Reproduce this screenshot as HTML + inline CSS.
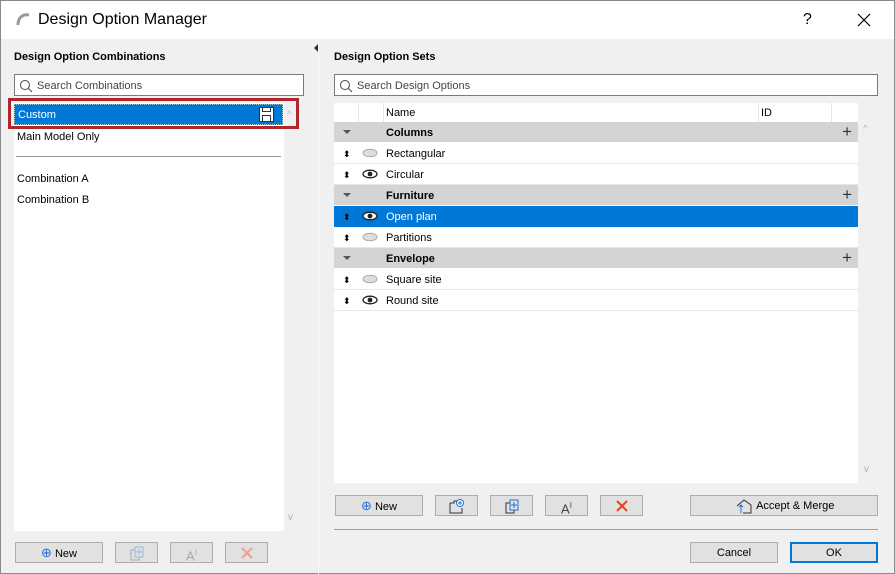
<!DOCTYPE html><html><head><style>
*{box-sizing:border-box;margin:0;padding:0}
body{width:895px;height:574px;overflow:hidden;font-family:"Liberation Sans",sans-serif;font-size:11px;color:#000;background:#f0f0f0;position:relative}
.a{position:absolute}
.win{left:0;top:0;width:895px;height:574px;border:1px solid #8a8a8a}
.title{left:1px;top:1px;width:893px;height:38px;background:#fff}
.hd{font-weight:bold;font-size:11px}
.search{background:#fff;border:1px solid #7a7a7a;height:22px;color:#444;padding-left:22px;line-height:22px}
.btn{background:#e1e1e1;border:1px solid #adadad;height:21px;text-align:center;line-height:20px}
.btn svg{vertical-align:middle}
.row{left:334px;width:524px;height:21px;border-bottom:1px solid #e6e6e6;background:#fff;line-height:22px}
.grp{background:#d4d4d4;font-weight:bold;border-bottom:1px solid #fff}
.sel{background:#0078d7;color:#fff}
.nm{position:absolute;left:52px}
.arr{position:absolute;left:9px;top:0;font-size:9px}
.tri{position:absolute;left:9px;top:8px;width:0;height:0;border-left:4px solid transparent;border-right:4px solid transparent;border-top:4px solid #555}
.plus{position:absolute;right:6px;top:-1px;font-size:17px;font-weight:normal;color:#333}
.eye{position:absolute;left:28px;top:5px}
</style></head><body>
<div class="a win"></div>
<div class="a title"></div>
<svg class="a" style="left:16px;top:12px" width="16" height="14"><path d="M2 13 C2 5 7 2 13 3" stroke="#999" stroke-width="3" fill="none"/></svg>
<div class="a" style="left:38px;top:11px;font-size:16px">Design Option Manager</div>
<div class="a" style="left:803px;top:11px;font-size:16px">?</div>
<svg class="a" style="left:857px;top:13px" width="14" height="14"><path d="M1 1L13 13M13 1L1 13" stroke="#000" stroke-width="1.2"/></svg>
<div class="a" style="left:318px;top:39px;width:1px;height:535px;background:#fafafa"></div>
<div class="a" style="left:314px;top:44px;width:0;height:0;border-top:4px solid transparent;border-bottom:4px solid transparent;border-right:4px solid #333"></div>

<div class="a hd" style="left:14px;top:51px">Design Option Combinations</div>
<div class="a search" style="left:14px;top:74px;width:290px">Search Combinations</div>
<svg class="a" style="left:19px;top:79px" width="14" height="14"><circle cx="6" cy="6" r="4.5" stroke="#444" fill="none"/><path d="M9.5 9.5L13 13" stroke="#444"/></svg>
<div class="a" style="left:14px;top:103px;width:270px;height:428px;background:#fff"></div>
<div class="a sel" style="left:14px;top:104px;width:269px;height:21px;line-height:21px;padding-left:3px;font-size:11px;border:1px dotted #9cc">Custom</div>
<svg class="a" style="left:259px;top:107px" width="15" height="15"><rect x="0.5" y="0.5" width="14" height="14" fill="#fff" stroke="#333"/><rect x="3.5" y="0.5" width="8" height="4" fill="#fff" stroke="#333"/><rect x="3.5" y="8.5" width="8" height="6" fill="#fff" stroke="#333"/></svg>
<div class="a" style="left:8px;top:98px;width:291px;height:31px;border:3px solid #b0262c"></div>
<div class="a" style="left:287px;top:110px;color:#bbb;font-size:10px">^</div>
<div class="a" style="left:17px;top:131px">Main Model Only</div>
<div class="a" style="left:16px;top:156px;width:265px;height:1px;background:#999"></div>
<div class="a" style="left:17px;top:173px">Combination A</div>
<div class="a" style="left:17px;top:194px">Combination B</div>
<div class="a" style="left:288px;top:512px;color:#aaa;font-size:10px">v</div>
<div class="a btn" style="left:15px;top:542px;width:88px"><span style="color:#1e6fd9;font-size:13px">⊕</span> New</div>
<div class="a btn" style="left:115px;top:542px;width:43px"><svg width="14" height="15"><rect x="1" y="4" width="8" height="10" fill="none" stroke="#aaa"/><rect x="5" y="1" width="8" height="10" fill="#e1e1e1" stroke="#9bb8e0"/><path d="M9 3v6M6 6h6" stroke="#9bb8e0"/></svg></div>
<div class="a btn" style="left:170px;top:542px;width:43px;color:#aaa;font-size:13px">A<sup style="font-size:8px">I</sup></div>
<div class="a btn" style="left:225px;top:542px;width:43px"><svg width="14" height="14"><path d="M2 2L12 12M12 2L2 12" stroke="#f0a090" stroke-width="2"/></svg></div>

<div class="a hd" style="left:334px;top:51px">Design Option Sets</div>
<div class="a search" style="left:334px;top:74px;width:544px">Search Design Options</div>
<svg class="a" style="left:339px;top:79px" width="14" height="14"><circle cx="6" cy="6" r="4.5" stroke="#444" fill="none"/><path d="M9.5 9.5L13 13" stroke="#444"/></svg>
<div class="a" style="left:334px;top:103px;width:524px;height:380px;background:#fff"></div>
<div class="a" style="left:334px;top:103px;width:524px;height:19px;background:#fff;line-height:20px">
<span class="a" style="left:24px;top:0;width:1px;height:19px;background:#e6e6e6"></span>
<span class="a" style="left:49px;top:0;width:1px;height:19px;background:#e6e6e6"></span>
<span class="a" style="left:52px">Name</span>
<span class="a" style="left:424px;top:0;width:1px;height:19px;background:#e6e6e6"></span>
<span class="a" style="left:427px">ID</span>
<span class="a" style="left:497px;top:0;width:1px;height:19px;background:#e6e6e6"></span></div>
<div class="a row grp" style="top:122px"><i class="tri"></i><span class="nm">Columns</span><span class="plus">+</span></div>
<div class="a row" style="top:143px"><span class="arr">⬍</span><svg class="eye" width="16" height="10"><ellipse cx="8" cy="5" rx="7" ry="3.8" fill="#ddd" stroke="#aaa"/></svg><span class="nm">Rectangular</span></div>
<div class="a row" style="top:164px"><span class="arr">⬍</span><svg class="eye" width="16" height="10"><ellipse cx="8" cy="5" rx="7" ry="3.8" fill="#fff" stroke="#222" stroke-width="1.3"/><circle cx="8" cy="5" r="2.4" fill="#222"/></svg><span class="nm">Circular</span></div>
<div class="a row grp" style="top:185px"><i class="tri"></i><span class="nm">Furniture</span><span class="plus">+</span></div>
<div class="a row sel" style="top:206px;border-bottom-color:#0078d7"><span class="arr" style="color:#000">⬍</span><svg class="eye" width="16" height="10"><ellipse cx="8" cy="5" rx="7" ry="3.8" fill="#fff" stroke="#222" stroke-width="1.3"/><circle cx="8" cy="5" r="2.4" fill="#222"/></svg><span class="nm">Open plan</span></div>
<div class="a row" style="top:227px"><span class="arr">⬍</span><svg class="eye" width="16" height="10"><ellipse cx="8" cy="5" rx="7" ry="3.8" fill="#ddd" stroke="#aaa"/></svg><span class="nm">Partitions</span></div>
<div class="a row grp" style="top:248px"><i class="tri"></i><span class="nm">Envelope</span><span class="plus">+</span></div>
<div class="a row" style="top:269px"><span class="arr">⬍</span><svg class="eye" width="16" height="10"><ellipse cx="8" cy="5" rx="7" ry="3.8" fill="#ddd" stroke="#aaa"/></svg><span class="nm">Square site</span></div>
<div class="a row" style="top:290px"><span class="arr">⬍</span><svg class="eye" width="16" height="10"><ellipse cx="8" cy="5" rx="7" ry="3.8" fill="#fff" stroke="#222" stroke-width="1.3"/><circle cx="8" cy="5" r="2.4" fill="#222"/></svg><span class="nm">Round site</span></div>
<div class="a" style="left:863px;top:124px;color:#bbb;font-size:10px">^</div>
<div class="a" style="left:864px;top:464px;color:#aaa;font-size:10px">v</div>
<div class="a btn" style="left:335px;top:495px;width:88px"><span style="color:#1e6fd9;font-size:13px">⊕</span> New</div>
<div class="a btn" style="left:435px;top:495px;width:43px"><svg width="16" height="15"><path d="M1 4h4v-2h3M1 4v10h12v-5" fill="none" stroke="#333"/><circle cx="11" cy="4" r="3.5" fill="#fff" stroke="#1e6fd9"/><path d="M11 2v4M9 4h4" stroke="#1e6fd9"/></svg></div>
<div class="a btn" style="left:490px;top:495px;width:43px"><svg width="14" height="15"><rect x="1" y="4" width="8" height="10" fill="none" stroke="#333"/><rect x="5" y="1" width="8" height="10" fill="#e1e1e1" stroke="#1e6fd9"/><path d="M9 3v6M6 6h6" stroke="#1e6fd9"/></svg></div>
<div class="a btn" style="left:545px;top:495px;width:43px;font-size:13px;color:#444">A<sup style="font-size:8px">I</sup></div>
<div class="a btn" style="left:600px;top:495px;width:43px"><svg width="14" height="14"><path d="M2 2L12 12M12 2L2 12" stroke="#e8401c" stroke-width="2"/></svg></div>
<div class="a btn" style="left:690px;top:495px;width:188px"><svg width="20" height="16"><path d="M3 8L10 2L17 7v8H9" fill="none" stroke="#333"/><path d="M7 15V7M5 9l2-2 2 2" fill="none" stroke="#1e6fd9"/></svg> Accept &amp; Merge</div>
<div class="a" style="left:334px;top:529px;width:544px;height:1px;background:#a0a0a0"></div>
<div class="a btn" style="left:690px;top:542px;width:88px">Cancel</div>
<div class="a btn" style="left:790px;top:542px;width:88px;border:2px solid #0078d7;line-height:18px">OK</div>
</body></html>
